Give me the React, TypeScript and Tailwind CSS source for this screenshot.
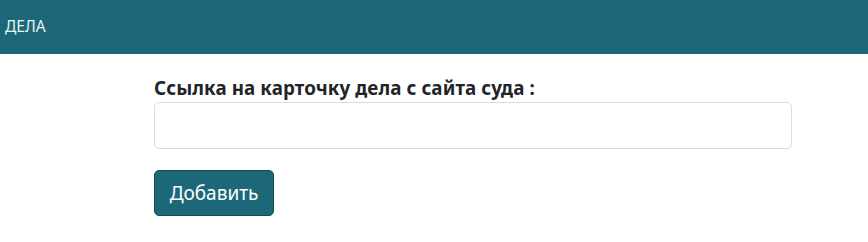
export default function App() {
  return (
    <div className="min-h-[242px] bg-white font-['Noto_Sans',sans-serif]">
      {/* Top bar */}
      <div className="flex h-[54px] items-center bg-[#1c6878] px-[5px]">
        <span className="text-[15.5px] text-[#e8f4f6]">ДЕЛА</span>
      </div>

      {/* Form */}
      <div className="ml-[154px] w-[638px] pt-[22px]">
        <label className="block text-[18.8px] font-bold leading-[25px] tracking-[0.1px] text-[#212529]">
          Ссылка на карточку дела с сайта суда :
        </label>
        <input
          type="text"
          className="mt-[1px] block h-[47px] w-full rounded-[5px] border border-[#dcdcdc] bg-white px-3 text-[17px] outline-none"
        />
        <button className="mt-[21px] h-[46px] w-[120px] rounded-[5px] border border-[#124b57] bg-[#1c6878] text-[19px] text-white">
          Добавить
        </button>
      </div>
    </div>
  );
}
